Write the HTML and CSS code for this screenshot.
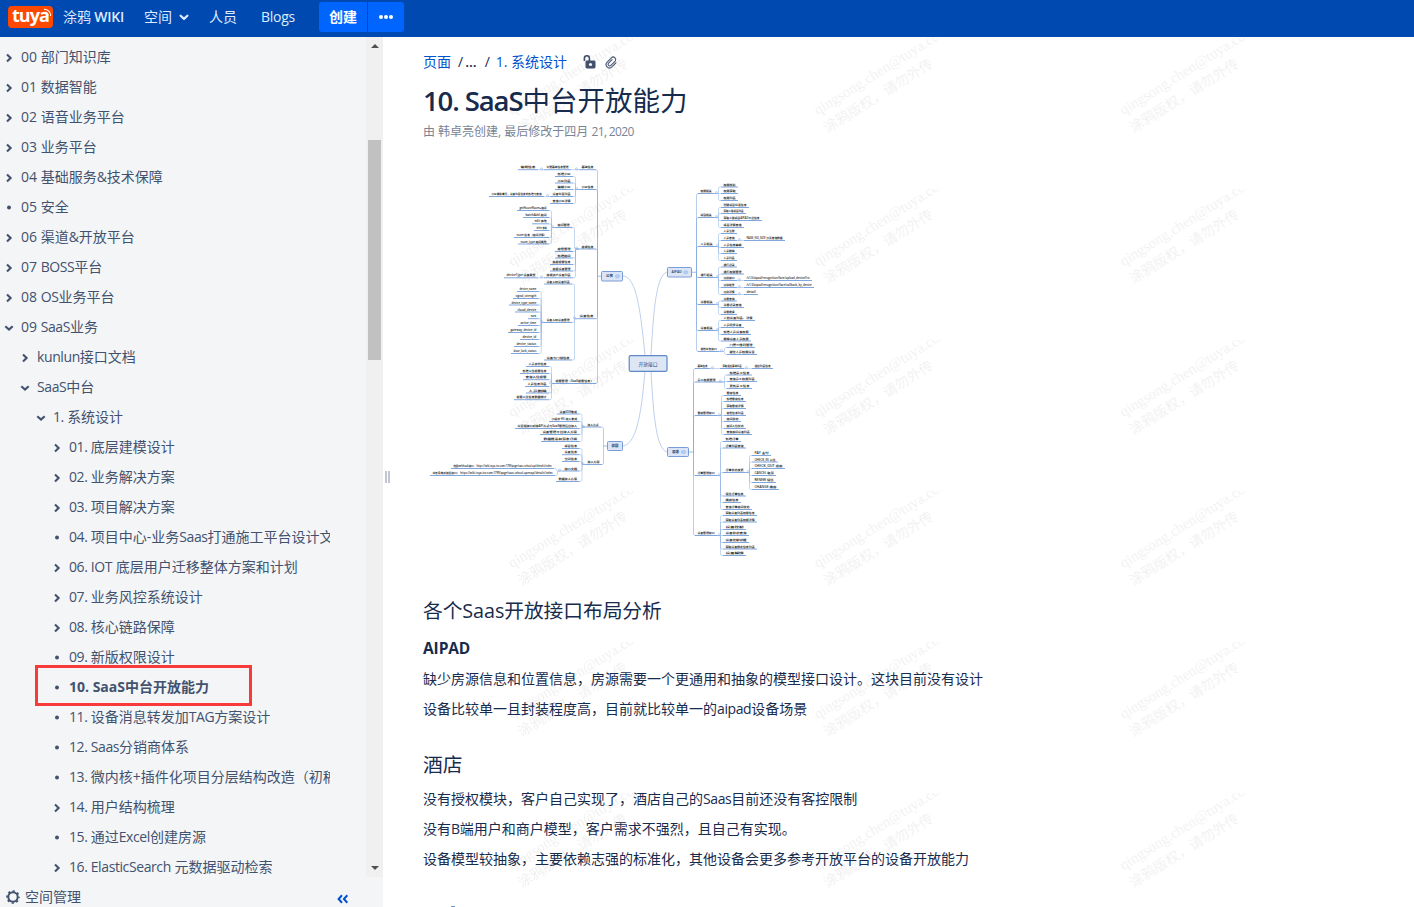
FILE: index.html
```html
<!DOCTYPE html>
<html lang="zh-CN">
<head>
<meta charset="utf-8">
<title>10. SaaS中台开放能力 - 涂鸦 WIKI</title>
<link rel="stylesheet" href="styles.css">
</head>
<body>
<header class="topbar">
  <div class="logo"><span>tuya</span>
    <svg class="logo-waves" width="9" height="9" viewBox="0 0 9 9"><path d="M1 1.2A6.5 6.5 0 0 1 7.6 8M1.6 4A3.8 3.8 0 0 1 5 7.6" fill="none" stroke="#fff" stroke-width="1.1"/></svg>
  </div>
  <span class="site">涂鸦 <b>WIKI</b></span>
  <span class="nav spaces">空间</span>
  <svg class="nav-caret" width="10" height="7" viewBox="0 0 10 7"><path d="M1.6 1.7 5 4.9 8.4 1.7" fill="none" stroke="#deebff" stroke-width="2.2" stroke-linecap="round" stroke-linejoin="round"/></svg>
  <span class="nav people">人员</span>
  <span class="nav blogs">Blogs</span>
  <div class="create">创建</div>
  <div class="more"><i></i><i></i><i></i></div>
</header>
<div class="layout">
  <aside class="sidebar">
    <div class="tree-wrap">
      <ul class="tree" id="tree"></ul>
      <div class="scrollbar"><i class="arrow up"></i><i class="thumb"></i><i class="arrow down"></i></div>
      <div class="highlight"></div>
    </div>
    <div class="side-foot">
      <svg width="14" height="14" viewBox="0 0 14 14"><circle cx="7" cy="7" r="4.7" fill="none" stroke="#42526e" stroke-width="2"/><circle cx="7" cy="7" r="6" fill="none" stroke="#42526e" stroke-width="1.6" stroke-dasharray="2.2 2.51" stroke-dashoffset="1.1"/></svg>
      <span>空间管理</span>
      <svg class="collapse" width="12" height="10" viewBox="0 0 12 10"><path d="M5 1.3 1.6 5 5 8.7M10.3 1.3 6.9 5l3.4 3.7" fill="none" stroke="#0052cc" stroke-width="2"/></svg>
    </div>
  </aside>
  <div class="splitter"><i></i><i></i></div>
  <main class="content">
    <nav class="crumbs">
      <a>页面</a><span class="sep1">/</span><b>...</b><span class="sep2">/</span><a>1. 系统设计</a>
      <svg class="lock" width="13" height="14" viewBox="0 0 13 14"><path d="M1.4 6V3.4a2.5 2.5 0 0 1 5-.2V6" fill="none" stroke="#42526e" stroke-width="1.6"/><rect x="2.5" y="5.5" width="10" height="8" rx="1.4" fill="#42526e"/><circle cx="7.5" cy="9.5" r="1.6" fill="#fff"/></svg>
      <svg class="clip" width="13" height="13" viewBox="0 0 13 13"><g transform="rotate(45 6.5 6.5)"><path d="M4.9 4v5a1.6 1.6 0 0 0 3.2 0V3.2a2.5 2.5 0 0 0-5 0V9.3a3.4 3.4 0 0 0 6.8 0V3.6" fill="none" stroke="#42526e" stroke-width="1.05" stroke-linecap="round"/></g></svg>
    </nav>
    <h1><span>10. SaaS</span>中台开放能力</h1>
    <p class="byline">由 韩卓亮创建, 最后修改于四月 <span>21, 2020</span></p>
    <svg class="mindmap" id="map" width="410" height="420" viewBox="423 150 410 420"></svg>
    <h2>各个Saas开放接口布局分析</h2>
    <h3>AIPAD</h3>
    <p>缺少房源信息和位置信息，房源需要一个更通用和抽象的模型接口设计。这块目前没有设计</p>
    <p>设备比较单一且封装程度高，目前就比较单一的<span class="latin">aipad</span>设备场景</p>
    <h2 class="second">酒店</h2>
    <p>没有授权模块，客户自己实现了，酒店自己的<span class="latin">Saas</span>目前还没有客控限制</p>
    <p>没有<span class="latin">B</span>端用户和商户模型，客户需求不强烈，且自己有实现。</p>
    <p>设备模型较抽象，主要依赖志强的标准化，其他设备会更多参考开放平台的设备开放能力</p>
    <div class="next-tip"></div>
  </main>
</div>
<svg class="watermark" width="1031" height="870">
  <defs>
    <pattern id="wm" x="103" y="1" width="305.8" height="151" patternUnits="userSpaceOnUse">
      <g transform="translate(26 77.5) rotate(-32)" fill="#000" fill-opacity=".06">
        <text class="wm-mail" x="0" y="0">qingsong.chen@tuya.com</text>
        <text class="wm-note" x="-1" y="20">涂鸦版权，请勿外传</text>
      </g>
    </pattern>
  </defs>
  <rect width="1031" height="870" fill="url(#wm)"/>
</svg>
<script src="app.js"></script>
</body>
</html>
```

FILE: styles.css
```css
* { box-sizing: border-box; }
body { margin: 0; width: 1414px; height: 907px; overflow: hidden; position: relative; background: #fff; color: #172b4d; font: 14px/20px "Open Sans", "Noto Sans CJK SC", sans-serif; }
h1, h2, h3, p, ul { margin: 0; padding: 0; font-weight: 400; }

.topbar { height: 37px; background: #0049b0; display: flex; align-items: center; padding: 0 0 3px 8px; color: #deebff; white-space: nowrap; }
.logo { width: 45px; height: 22px; background: #ff4800; border-radius: 4px; color: #fff; position: relative; font: 700 18px/19px "Open Sans", sans-serif; letter-spacing: -1px; padding-left: 4px; }
.logo-waves { position: absolute; right: 1px; top: 2px; }
.site { margin-left: 10px; width: 81px; letter-spacing: -.1px; }
.site b { font-weight: 600; letter-spacing: -.25px; }
.nav-caret { margin: 0 20px 0 7px; }
.people { width: 28px; }
.blogs { margin-left: 24px; width: 58px; letter-spacing: -.25px; }
.create { width: 48px; height: 30px; line-height: 30px; background: #0065ff; border-radius: 3px 0 0 3px; color: #fff; font-weight: 700; text-align: center; }
.more { width: 36px; height: 30px; margin-left: 1px; background: #0065ff; border-radius: 0 3px 3px 0; display: flex; gap: 1px; align-items: center; justify-content: center; }
.more i { width: 4px; height: 4px; border-radius: 50%; background: #fff; }

.layout { display: flex; height: 870px; }
.sidebar { width: 383px; background: #f4f5f7; display: flex; flex-direction: column; color: #42526e; }
.tree-wrap { height: 840px; position: relative; display: flex; overflow: hidden; }
.tree { list-style: none; width: 330px; padding-top: 5px; overflow: hidden; flex: none; }
.node { height: 30px; display: flex; align-items: center; white-space: nowrap; }
.node svg { flex: none; margin: 1px 6px 0 3px; }
.node .label { flex: none; }
.latin { letter-spacing: -.4px; }
.level-0 { padding-left: 0; }
.level-1 { padding-left: 16px; }
.level-2 { padding-left: 32px; }
.level-3 { padding-left: 48px; }
.current { font-weight: 700; }
.scrollbar { width: 17px; margin-left: 36px; background: #f0f0f0; display: flex; flex-direction: column; align-items: center; }
.arrow { width: 0; height: 0; border: 4px solid transparent; }
.up { margin-top: 3px; border-bottom-color: #505050; }
.thumb { width: 13px; height: 220px; margin: 92px 0 0; background: #c1c1c1; }
.down { margin-top: auto; margin-bottom: 3px; border-top-color: #505050; }
.highlight { position: absolute; left: 35px; top: 628px; width: 217px; height: 41px; border: 3px solid #f93a3a; }
.side-foot { height: 30px; padding: 10px 0 0 6px; display: flex; align-items: center; }
.side-foot span { margin-left: 5px; }
.collapse { margin-left: 256px; margin-top: 3px; }
.splitter { width: 8px; display: flex; gap: 1px; padding: 434px 0 0 2px; }
.splitter i { width: 2px; height: 12px; background: #c1c7d0; }

.content { padding: 15px 0 0 32px; width: 1023px; }
.crumbs { display: flex; align-items: center; height: 20px; white-space: nowrap; }
.crumbs a { color: #0052cc; }
.crumbs b { margin-left: 2px; font-weight: 600; }
.sep1 { margin-left: 7px; }
.sep2 { margin: 0 6px 0 8px; }
.lock { margin-left: 16px; }
.clip { margin-left: 9px; }
h1 { font-size: 27.5px; line-height: 36px; margin-top: 11px; white-space: nowrap; }
h1 span { font-weight: 600; letter-spacing: -1.1px; }
.mindmap { display: block; margin-top: 9px; }
.mindmap .topic { fill: #1a1d24; font: 600 2.8px "Open Sans", "Noto Sans CJK SC", sans-serif; }
.mindmap .box-text { fill: #203864; font: 600 3.4px "Open Sans", "Noto Sans CJK SC", sans-serif; text-anchor: middle; }
.mindmap .root-text { fill: #26457c; font: 4.8px "Open Sans", "Noto Sans CJK SC", sans-serif; text-anchor: middle; }
h2 { font-size: 19.8px; line-height: 30px; margin-top: 26px; letter-spacing: -.1px; }
h2.second { margin-top: 31px; }
h3 { font-size: 15.5px; line-height: 24px; font-weight: 700; margin-top: 10px; letter-spacing: -.1px; }
.content p { margin-top: 10px; white-space: nowrap; }
.content h3 + p, .content h2.second + p { margin-top: 9px; }
.content .byline { font-size: 12px; line-height: 18px; margin-top: 4px; color: #7a8494; }
.byline span { letter-spacing: -.65px; }
.next-tip { width: 4px; height: 2px; margin: 37px 0 0 28px; background: #6d91d1; }

.watermark { position: absolute; left: 383px; top: 37px; pointer-events: none; }
.wm-mail { font: 15px "Liberation Serif", serif; }
.wm-note { font: 14px "Noto Sans CJK SC", sans-serif; }
```

FILE: app.js
```js
const items = [
  [0, '>', '00 部门知识库'], [0, '>', '01 数据智能'], [0, '>', '02 语音业务平台'],
  [0, '>', '03 业务平台'], [0, '>', '04 基础服务&技术保障'], [0, '.', '05 安全'],
  [0, '>', '06 渠道&开放平台'], [0, '>', '07 BOSS平台'], [0, '>', '08 OS业务平台'],
  [0, 'v', '09 SaaS业务'], [1, '>', 'kunlun接口文档'], [1, 'v', 'SaaS中台'],
  [2, 'v', '1. 系统设计'], [3, '>', '01. 底层建模设计'], [3, '>', '02. 业务解决方案'],
  [3, '>', '03. 项目解决方案'], [3, '.', '04. 项目中心-业务Saas打通施工平台设计文档'],
  [3, '>', '06. IOT 底层用户迁移整体方案和计划'], [3, '>', '07. 业务风控系统设计'],
  [3, '>', '08. 核心链路保障'], [3, '.', '09. 新版权限设计'], [3, '.', '10. SaaS中台开放能力', true],
  [3, '.', '11. 设备消息转发加TAG方案设计'], [3, '.', '12. Saas分销商体系'],
  [3, '.', '13. 微内核+插件化项目分层结构改造（初稿）'], [3, '>', '14. 用户结构梳理'],
  [3, '.', '15. 通过Excel创建房源'], [3, '>', '16. ElasticSearch 元数据驱动检索']
];
const chevron = d => `<path d="${d}" fill="none" stroke="#42526e" stroke-width="2.1"/>`;
const icons = {
  '>': chevron('M4 2.6 7.6 6 4 9.4'),
  'v': chevron('M2.3 4.2 6 7.6 9.7 4.2'),
  '.': '<circle cx="6" cy="5.5" r="2" fill="#42526e"/>'
};
const format = (text, current) => current ? text :
  text.replace(/&/g, '&amp;').replace(/\d+\. |[A-Za-z]{2,}(?!;)/g, m => m === 'am' ? m : `<span class="latin">${m}</span>`);
document.getElementById('tree').innerHTML = items.map(([level, icon, text, current]) =>
  `<li class="node level-${level}${current ? ' current' : ''}"><svg width="12" height="12" viewBox="0 0 12 12">${icons[icon]}</svg><span class="label">${format(text, current)}</span></li>`
).join('');

// Topic: [left, right, underline y, label, children]
const leaves = (edge, side, list) => list.map(([x, y, text, kids]) =>
  side < 0 ? [x, edge, y, text, kids] : [edge, x, y, text, kids]);

const apartment = [
  [579, 596, 169.7, '基础信息', [[544, 571, 169.7, '公寓基本信息管理', [[518, 538, 169.7, '常规信息']]]]],
  [579, 596, 189.5, '小区信息', leaves(573, -1, [
    [555, 176.5, '新增小区'], [555, 183, '小区列表'], [555, 189.5, '编辑小区'],
    [550, 196.5, '设备位置列表', [[489, 544, 196.5, '小区楼栋单元，设备位置信息的新增与查询']]],
    [550, 203.5, '查询小区详情']])],
  [579, 596, 249, '房源信息', [
    [555, 572, 227.5, '房间管理', leaves(549, -1, [
      [517, 210.5, 'getHouseRoom+房间'], [523, 217.5, 'batchAdd 房间'], [532, 223.8, 'edit 修改'],
      [534, 230.5, 'delete 删除'], [514, 237.5, 'room 信息（房间详情）'], [518, 244, 'room_type 房间类型']])],
    ...leaves(573, -1, [[555, 251.5, '房型管理'], [555, 258, '新增房间'], [550, 264.5, '房屋租客信息'],
      [550, 271, '房屋设备管理'], [544, 277.8, '房源资产设备列表', [[504, 538, 277.8, 'deviceType 设备类型']]]])]],
  [577, 596, 318.7, '设备信息', [
    [544, 572, 284, '设备入网设备列表'],
    [544, 572, 322.5, '设备入网设备管理', leaves(538.7, -1, [
      [517, 291.5, 'device_name'], [513, 298.5, 'signal_strength'], [509, 305, 'device_type_name'],
      [515, 312, 'cloud_device'], [528, 318.7, 'sn'], [518, 325.5, 'active_time'],
      [508, 332.5, 'gateway_device_id'], [520, 339.5, 'device_id'], [514, 346.5, 'device_status'],
      [511, 353.5, 'door_lock_status']])],
    [544, 572, 360, '设备与门锁信息']]],
  [553, 596, 383.5, '租客管理（SaaS租客信息）', leaves(549, -1, [
    [526, 366.5, '人员身份信息'], [520, 373.5, '新增入住租客信息'], [523, 379.7, '查询入住租客'],
    [525, 386.5, '人员信息列表'], [526, 393, '人员删除'], [514, 399.7, '租客入住信息数据统计']])]
];
const campus = [
  [585, 601, 427, '接入方式', leaves(579.5, -1, [
    [557, 414, '设备SDK集成'], [549, 421.5, '小程序 H5 接入集成'],
    [515, 428.5, '以云端接口对接API方式与SaaS管理后台接入'], [540, 434.5, '设备管理平台接入方案'], [541, 441.5, '数据推送和消息订阅']])],
  [585, 602, 464.5, '接入方案', leaves(579.5, -1, [
    [562, 448.5, '项目信息'], [562, 454.7, '设备信息'], [562, 461.5, '空间信息'],
    [562, 471, '接口文档', [
      [451, 554, 468.5, '校园webhook接口： https://wiki.tuya-inc.com:7799/page/saas-school-api/details/index'],
      [430, 555, 475.5, '业务系统对接云接口： https://wiki.tuya-inc.com:7799/page/saas-school-openapi/details/index']]],
    [556, 481.5, '数据接入方案']])]
];
const aipad = [
  [698, 714, 193.5, '权限相关', leaves(721, 1, [[738, 187, '权限校验'], [738, 193.5, '权限获取'], [738, 200.5, '权限列表']])],
  [698, 714, 217.5, '项目相关', leaves(721, 1, [
    [749, 207.5, '创建项目位置信息'], [746, 213.5, '获取上级项目列表'], [762, 220.5, '获取上级项目AIPAD平台信息'], [744, 227.5, '项目详情查询']])],
  [698, 715, 246.5, '人员相关', leaves(721, 1, [
    [737, 233.5, '人员注册'], [737, 240.5, '人员查询', [[744, 785, 240.5, 'PAGE_NO_SIZE 分页查询数据']]],
    [744, 247.5, '人员信息编辑'], [737, 253.5, '人员删除'], [737, 260.5, '人员列表']])],
  [698, 715, 277.5, '通行相关', leaves(721, 1, [
    [737, 267, '通行记录'], [744, 274, '通行权限管理'],
    [737, 280.5, '识别接口', [[744, 812, 280.5, '/v1.0/aipad/recognition/face/upload_device/list']]],
    [737, 287.5, '识别结果', [[744, 814, 287.5, '/v1.0/aipad/recognition/face/callback_by_device']]],
    [737, 294.5, '识别详情', [[744, 758, 294.5, 'detail']]]])],
  [698, 715, 304.5, '访客相关', leaves(721, 1, [[737, 301, '访客查询'], [744, 307.5, '访客记录查询'], [737, 314.5, '访客邀请']])],
  [698, 715, 330.5, '设备相关', leaves(721, 1, [
    [755, 320.5, '人脸设备列表、详情'], [744, 327.5, '人员同步设备'], [751, 334.5, '新增人员设备权限'], [751, 341, '删除设备人员权限']])],
  [698, 719, 351.5, '其他业务接口', leaves(727, 1, [[755, 347.5, '门禁二维码管理'], [757, 354.5, '梯控人员权限设置']])]
];
const hotel = [
  [695, 710, 368.5, '基础信息', [[720, 744, 368.5, '获取酒店基础列表', [[752, 773, 368.5, '酒店列表信息']]]]],
  [695, 718, 382, '员工权限管理', leaves(727, 1, [[752, 375, '新增员工信息'], [757, 381.5, '查询员工权限列表'], [752, 388.5, '更新员工信息']])],
  [695, 717, 415.5, '客房管理接口', leaves(724, 1, [
    [741, 395.5, '客房信息'], [746, 401.5, '新增客房信息'], [746, 408.5, '获取客房详情'], [746, 415.5, '房型信息列表'],
    [741, 421.5, '房间状态'], [746, 428.5, '房间入住状态'], [752, 434.5, '查询房间设备列表']])],
  [695, 717, 475.5, '订单管理接口', leaves(723, 1, [
    [741, 441.5, '新增订单'], [746, 448, '订单列表查询'],
    [746, 472.5, '订单状态变更', leaves(752, 1, [
      [771, 455.5, 'PAY 支付'], [778, 462, 'CHECK_IN 入住'], [785, 468.5, 'CHECK_OUT 退房'],
      [776, 475.5, 'CANCEL 取消'], [776, 482.5, 'RENEW 续住'], [779, 489.5, 'CHANGE 换房']])],
    [746, 496, '续住订单信息'], [741, 502.5, '换房信息'], [752, 509.5, '查询订单房间状态']])],
  [695, 717, 535.5, '设备管理接口', leaves(723, 1, [
    [757, 515.5, '获取设备列表权限信息'], [757, 522, '获取设备列表权限详情'], [746, 529.5, '设备控制'],
    [749, 535.5, '设备状态查询'], [749, 542.5, '设备控制功能'], [757, 549, '获取设备绑定信息列表'], [746, 555.5, '设备解绑']])]
];

const out = [];
const line = (d, w, c = '#5f8fd6') => out.push(`<path d="${d}" fill="none" stroke="${c}" stroke-width="${w}"/>`);

function draw(topic, side) {
  const [l, r, y, text, kids] = topic;
  line(`M${l} ${y}H${r}`, 0.8);
  out.push(`<text class="topic" x="${l + 2.4}" y="${y - 1.5}" textLength="${r - l - 4.8}" lengthAdjust="spacingAndGlyphs">${text}</text>`);
  if (!kids) return;
  const start = side > 0 ? r : l;
  out.push(`<circle cx="${start + side * 2.4}" cy="${y - 0.8}" r="1.2" fill="#e3ecfa" stroke="#8cacdf" stroke-width=".4"/>`);
  kids.forEach(kid => {
    const end = side > 0 ? kid[0] : kid[1];
    const bus = end - side * 2.5;
    const turn = Math.sign(kid[2] - y);
    line(turn ? `M${start} ${y}H${bus - side}Q${bus} ${y} ${bus} ${y + turn}V${kid[2] - turn}Q${bus} ${kid[2]} ${end} ${kid[2]}` : `M${start} ${y}H${end}`, 0.5, '#8fb0e2');
    draw(kid, side);
  });
}

function branch(box, text, side, trunk, topics) {
  const [x, y, w, h] = box;
  const mid = y + h / 2;
  topics.forEach(t => {
    const end = side > 0 ? t[0] : t[1];
    const turn = Math.sign(t[2] - mid);
    line(`M${trunk} ${mid}V${t[2] - turn * 2}Q${trunk} ${t[2]} ${end} ${t[2]}`, 0.55, '#7fa3dc');
    draw(t, side);
  });
  const edge = side > 0 ? x + w : x;
  line(`M${edge} ${mid}H${trunk}`, 0.6);
  out.push(`<rect x="${x}" y="${y}" width="${w}" height="${h}" rx="1" fill="#dbe5f5" stroke="#6b92d0" stroke-width=".9"/>`);
  const hasBadge = w > 17;
  out.push(`<text class="box-text" x="${x + w * (hasBadge ? 0.38 : 0.5)}" y="${mid + 1.2}">${text}</text>`);
  if (hasBadge) out.push(`<ellipse cx="${x + w * 0.76}" cy="${mid}" rx="2.1" ry="1.6" fill="#b5d0f6" stroke="#7da5e3" stroke-width=".4"/>`);
}

['M623 276C637 276 641 316 645 355', 'M667 272C655 275 653 322 651 355',
 'M623 446C638 444 642 405 645 371', 'M667 452C655 449 653 405 651 371'
].forEach(d => line(d, 0.7, '#a3bce4'));
branch([601.5, 271.5, 21, 9.5], '公寓', -1, 597.5, apartment);
branch([607.5, 441.5, 15, 9], '校园', -1, 603.5, campus);
branch([667.5, 267.5, 24, 9.5], 'AIPAD', 1, 696.5, aipad);
branch([667.5, 447.5, 21, 9], '酒店', 1, 693.5, hotel);
out.push('<rect x="629.2" y="355.7" width="37.8" height="15.6" rx="1.2" fill="#dde6f4" stroke="#5f88c8" stroke-width="1.2"/>');
out.push('<text class="root-text" x="648" y="365.6">开放接口</text>');
document.getElementById('map').innerHTML = out.join('');
```
